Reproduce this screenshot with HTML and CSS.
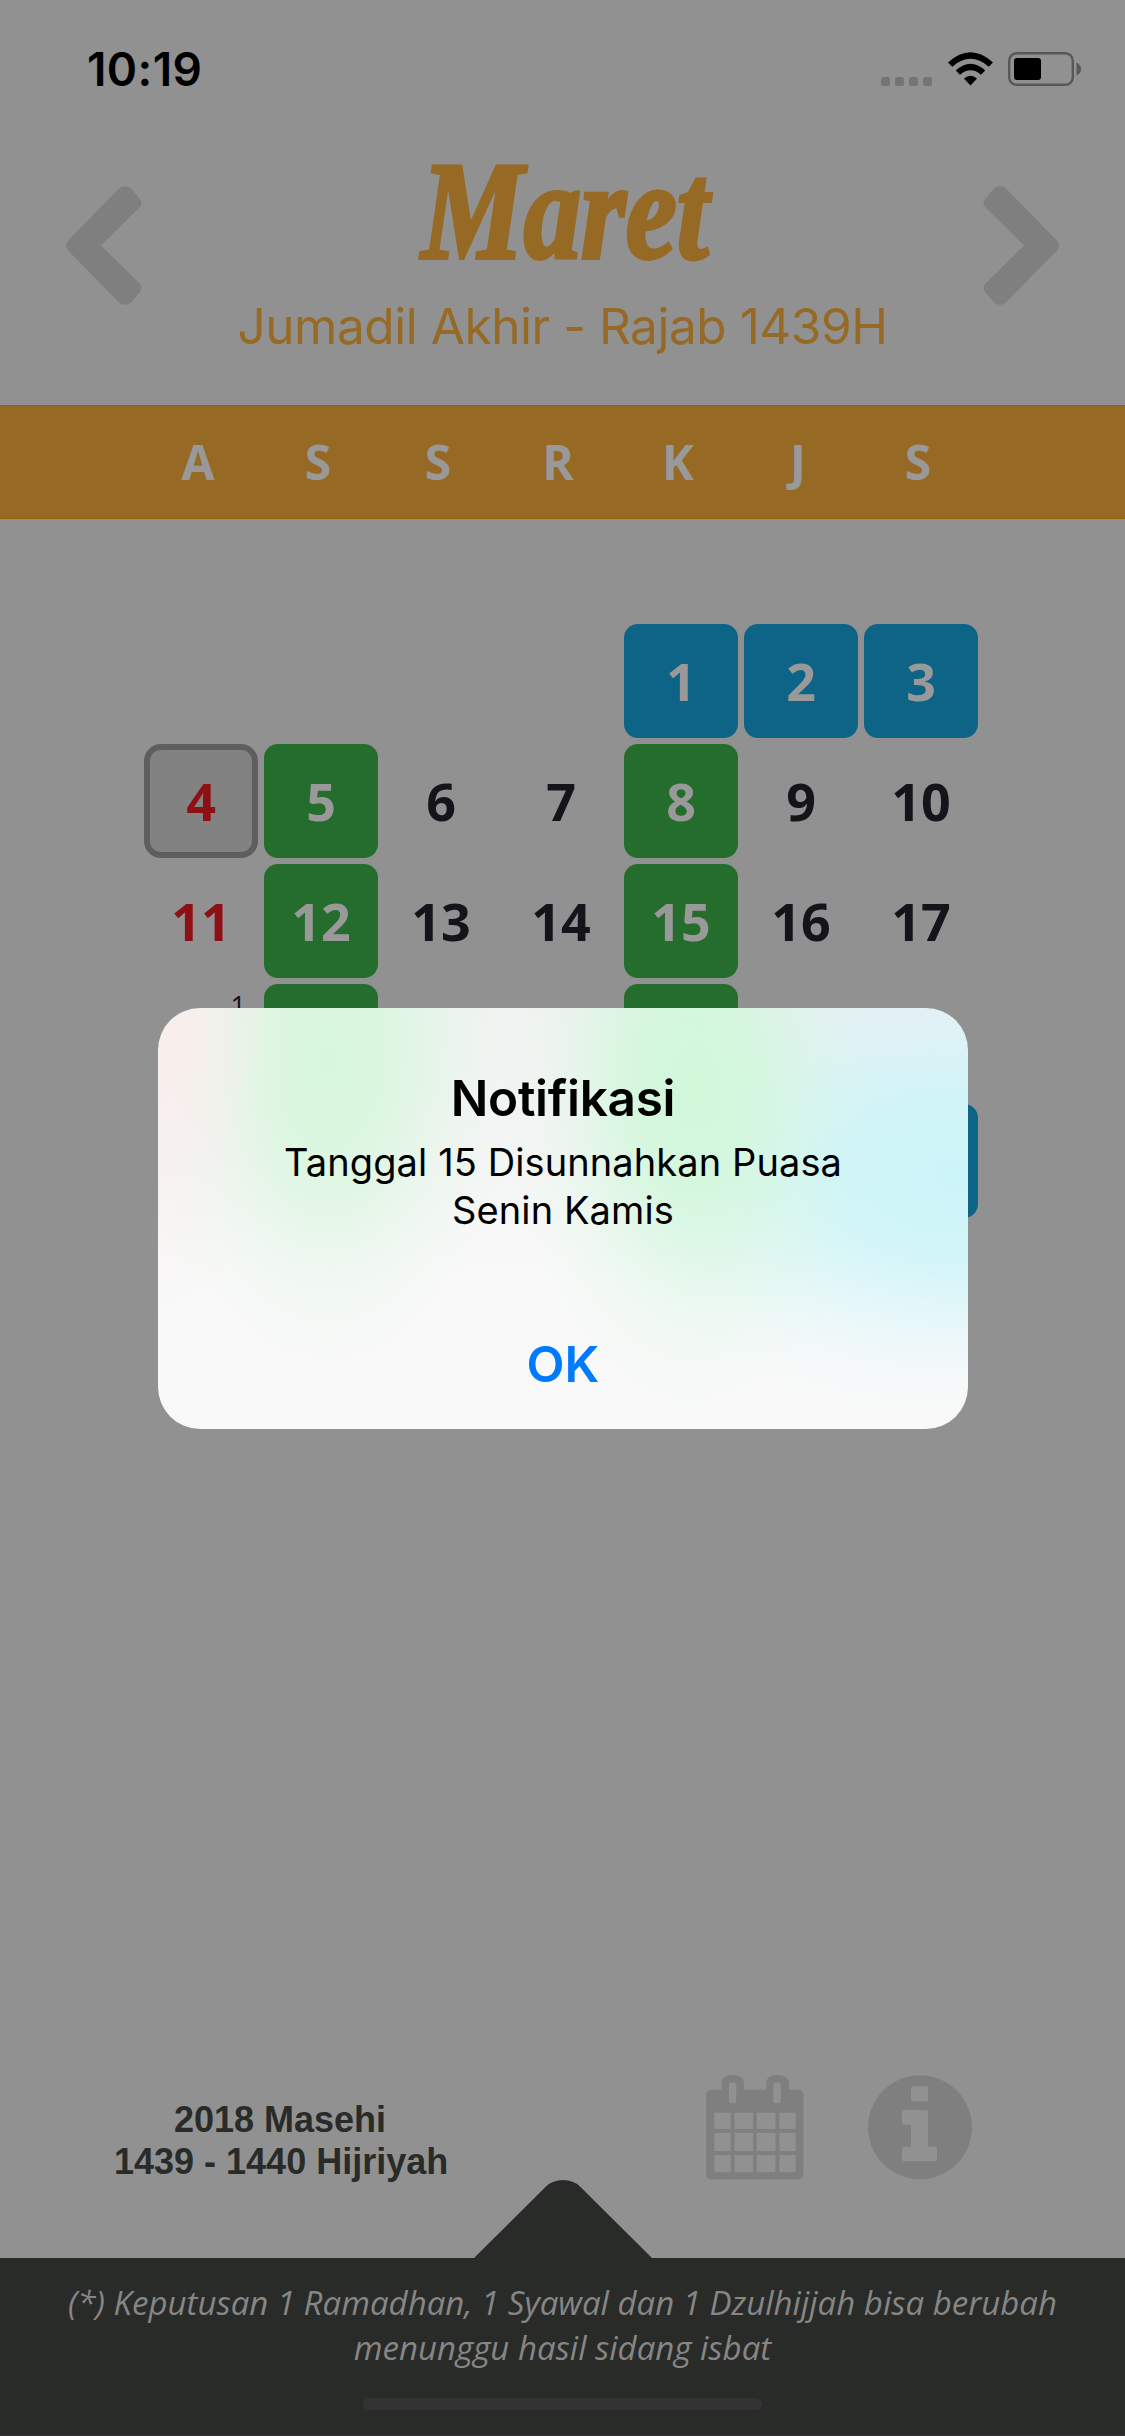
FILE: index.html
```html
<!DOCTYPE html>
<html lang="id">
<head>
<meta charset="utf-8">
<title>Kalender Hijriyah</title>
<link rel="stylesheet" href="styles.css">
</head>
<body>
<div class="screen">
  <div class="status">
    <span class="clock">10:19</span>
    <div class="signals">
      <div class="dots"><i></i><i></i><i></i><i></i></div>
      <svg class="wifi" width="45" height="34" viewBox="0 0 45 34">
        <path d="M0 10.500Q22.500-10 45 10.500L40.700 14.700Q22.500-1 4.300 14.700Z"/>
        <path d="M7.800 18.500Q22.500 5 37.200 18.500L33 22.700Q22.500 14 12 22.700Z"/>
        <path d="M16 26.500Q22.500 21 29 26.500L22.500 33.500Z"/>
      </svg>
      <svg class="battery" width="74" height="34" viewBox="0 0 74 34">
        <rect x="1.200" y="1.200" width="63.600" height="31.600" rx="7.500" fill="none" stroke="#585858" stroke-width="2.400"/>
        <rect x="6" y="6" width="27" height="22" rx="3" fill="#000"/>
        <path d="M68.500 10.500Q73 13 73 17T68.500 23.500Z" fill="#585858"/>
      </svg>
    </div>
  </div>

  <header class="month">
    <svg class="arrow" width="76" height="119" viewBox="0 0 76 119"><path d="M53 2.500Q59-2 65 2.500L73 12Q78 17 73 22L35 59.500L73 97Q78 102 73 107L65 116.500Q59 121 53 116.500L3 65.500Q-3 59.500 3 53.500Z"/></svg>
    <div class="titles">
      <h1 class="name">Maret</h1>
      <p class="hijri">Jumadil Akhir - Rajab 1439H</p>
    </div>
    <svg class="arrow next" width="76" height="119" viewBox="0 0 76 119"><path d="M53 2.500Q59-2 65 2.500L73 12Q78 17 73 22L35 59.500L73 97Q78 102 73 107L65 116.500Q59 121 53 116.500L3 65.500Q-3 59.500 3 53.500Z"/></svg>
  </header>

  <div class="weekdays"><span>A</span><span>S</span><span>S</span><span>R</span><span>K</span><span>J</span><span>S</span></div>

  <main class="days">
    <div class="day first blue">1</div><div class="day blue">2</div><div class="day blue">3</div>
    <div class="day sunday today">4</div><div class="day green">5</div><div class="day">6</div><div class="day">7</div><div class="day green">8</div><div class="day">9</div><div class="day">10</div>
    <div class="day sunday">11</div><div class="day green">12</div><div class="day">13</div><div class="day">14</div><div class="day green">15</div><div class="day">16</div><div class="day">17</div>
    <div class="day"><sup class="mark">1</sup></div><div class="day green"></div><div class="day"></div><div class="day"></div><div class="day green"></div><div class="day"></div><div class="day"></div>
    <div class="day"></div><div class="day green"></div><div class="day"></div><div class="day"></div><div class="day green"></div><div class="day blue"></div><div class="day blue"></div>
  </main>

  <div class="tools">
    <p class="years">2018 Masehi<br>1439 - 1440 Hijriyah</p>
    <svg class="tool" width="98" height="105" viewBox="0 0 98 105">
      <path d="M6 14.700H15.500V9Q15.500 0 26.800 0T38.200 9V14.700H60.200V9Q60.200 0 71.600 0T83 9V14.700H91.500Q97.500 14.700 97.500 21V98Q97.500 104.500 91.500 104.500H6Q0 104.500 0 98V21Q0 14.700 6 14.700Z"/>
      <g class="hole">
        <rect x="23" y="7.400" width="7.200" height="20.800" rx="2"/><rect x="67.400" y="7.400" width="7.400" height="20.800" rx="2"/>
        <path d="M8.300 37.700h16.500v16.300h-16.500zM28.500 37.700h18.700v16.300h-18.700zM50.800 37.700h18.700v16.300h-18.700zM73.500 37.700h16.200v16.300h-16.200zM8.300 57.700h16.500v18.300h-16.500zM28.500 57.700h18.700v18.300h-18.700zM50.800 57.700h18.700v18.300h-18.700zM73.500 57.700h16.200v18.300h-16.200zM8.300 80h16.500v17.300h-16.500zM28.500 80h18.700v17.300h-18.700zM50.800 80h18.700v17.300h-18.700zM73.500 80h16.200v17.300h-16.200z"/>
      </g>
    </svg>
    <svg class="tool info" width="104" height="105" viewBox="0 0 104 105">
      <circle cx="52" cy="52.300" r="52"/>
      <g class="hole">
        <rect x="43" y="11.300" width="17" height="15.200" rx="2"/>
        <path d="M36 35H58Q60 35 60 37V71.700H67Q69 71.700 69 73.700V84.300Q69 86.300 67 86.300H36Q34 86.300 34 84.300V73.700Q34 71.700 36 71.700H43V49.700H36Q34 49.700 34 47.700V37Q34 35 36 35Z"/>
      </g>
    </svg>
  </div>

  <svg class="peak" width="180" height="79" viewBox="0 0 180 79"><path d="M0 79L73 6.500Q79.500 0 90 0T107 6.500L180 79Z"/></svg>
  <footer class="note">
    <p>(*) Keputusan 1 Ramadhan, 1 Syawal dan 1 Dzulhijjah bisa berubah<br>menunggu hasil sidang isbat</p>
    <div class="home"></div>
  </footer>

  <div class="alert" role="alertdialog">
    <h2>Notifikasi</h2>
    <p>Tanggal 15 Disunnahkan Puasa<br>Senin Kamis</p>
    <button type="button">OK</button>
  </div>
</div>
</body>
</html>
```
FILE: styles.css
```css
* { box-sizing: border-box; }
body { margin: 0; }
h1, h2, p { margin: 0; }

.screen {
  position: relative;
  display: flex;
  flex-direction: column;
  width: 1125px;
  height: 2436px;
  overflow: hidden;
  background: #919191;
  font-family: Inter, "Liberation Sans", sans-serif;
}

/* Status bar */
.status {
  display: flex;
  justify-content: space-between;
  height: 132px;
  padding: 52px 43px 0 87px;
}
.clock {
  height: 34px;
  font-size: 46px;
  font-weight: 600;
  line-height: 35px;
  letter-spacing: .4px;
}
.signals { display: flex; align-items: flex-start; height: 34px; }
.dots { display: flex; gap: 5px; margin: 24.500px 16px 0 0; }
.dots i { width: 9px; height: 9px; border-radius: 2.500px; background: #747474; }
.wifi { margin-right: 15px; }

/* Month heading */
.month {
  display: flex;
  justify-content: space-between;
  height: 273px;
  padding: 54px 66px 0;
}
.arrow { fill: #7f7f7f; }
.next { transform: scaleX(-1); }
.titles { color: #966a25; text-align: center; white-space: nowrap; }
.name {
  height: 150px;
  margin-top: -50px;
  font: italic 700 140px/150px "Liberation Serif", serif;
  transform: translateX(3px) scaleX(.82);
  -webkit-text-stroke: 4px #966a25;
}
.hijri {
  margin-top: 10px;
  font-size: 49.500px;
  font-weight: 400;
  line-height: 60px;
  letter-spacing: -.45px;
}

/* Weekday strip */
.weekdays {
  display: grid;
  grid-template-columns: repeat(7, 120px);
  height: 114px;
  padding-left: 138px;
  border-top: 1px solid #965f0c;
  border-bottom: 1px solid #965f0c;
  background: #966a25;
  color: #999;
  font: 700 48px/112px "Open Sans", sans-serif;
  text-align: center;
}

/* Date grid */
.days {
  display: grid;
  grid-template-columns: repeat(7, 114px);
  grid-auto-rows: 114px;
  gap: 6px;
  height: 1509px;
  padding: 105px 0 0 144px;
  align-content: start;
  color: #14151a;
  font: 700 52px/114px "Open Sans", sans-serif;
  text-align: center;
}
.first { grid-column-start: 5; }
.day { border-radius: 14px; }
.blue { background: #0e6486; color: #999; }
.green { background: #246d2c; color: #999; }
.sunday { color: #8e1014; }
.today {
  border: 6px solid #5e5e5e;
  border-radius: 17px;
  background: #828282;
  line-height: 102px;
}
.mark {
  display: block;
  padding-right: 12px;
  font: 400 27px/43px "Open Sans", sans-serif;
  text-align: right;
}

/* Year and tool icons */
.tools {
  display: flex;
  align-items: flex-start;
  height: 152px;
  padding: 47px 0 0 114px;
}
.years {
  width: 332px;
  margin-top: 24px;
  color: #292b28;
  font: 700 36px/41.500px "Liberation Sans", sans-serif;
  text-align: center;
  white-space: nowrap;
}
.tool { margin-left: 259.600px; fill: #7f7f7f; }
.info { margin-left: 64.500px; }
.hole { fill: #919191; }

/* Footer */
.peak { flex: none; margin: 0 0 -1px 473px; fill: #292b28; }
.note {
  flex: 1;
  border-bottom: 1px solid #353333;
  background: #292b28;
  color: #868686;
  font: italic 400 33px/45.300px "Open Sans", sans-serif;
  text-align: center;
  white-space: nowrap;
}
.note p { padding-top: 22px; }
.home {
  width: 399px;
  height: 12px;
  margin: 27px auto 0;
  border-radius: 6px;
  background: #333;
}

/* Dialog over the calendar */
.alert {
  position: absolute;
  left: 158px;
  top: 1008px;
  width: 810px;
  height: 421px;
  padding-top: 60px;
  border-radius: 42px;
  background:
    radial-gradient(ellipse 130px 300px at 0 5%, #f9eeec, #f9eeec99 40%, #f9eeec22 80%, #f9eeec00),
    radial-gradient(ellipse 190px 330px at 21% 12%, #d7f7dc, #d7f7dcd0 30%, #d7f7dc55 60%, #d7f7dc18 82%, #d7f7dc00),
    radial-gradient(ellipse 190px 340px at 66% 18%, #d0f8d9, #d0f8d9d0 30%, #d0f8d955 60%, #d0f8d918 82%, #d0f8d900),
    radial-gradient(ellipse 380px 240px at 99% 40%, #ccf5f9, #ccf5f9d8 35%, #ccf5f955 65%, #ccf5f918 83%, #ccf5f900),
    radial-gradient(ellipse 330px 200px at 90% 0, #ebeff4, #ebeff4aa 40%, #ebeff400),
    linear-gradient(#f1f3f2, #f4f5f5 35%, #f9f9f9 65%);
  color: #000;
  text-align: center;
}
.alert h2 { font-size: 49.500px; font-weight: 600; line-height: 60px; letter-spacing: -.3px; }
.alert p { margin-top: 10px; font-size: 38px; line-height: 48px; letter-spacing: .1px; }
.alert button {
  display: block;
  width: 100%;
  margin-top: 64px;
  padding: 0;
  border: 0;
  background: none;
  color: #007aff;
  font: 600 49.500px/132px Inter, sans-serif;
}
```
